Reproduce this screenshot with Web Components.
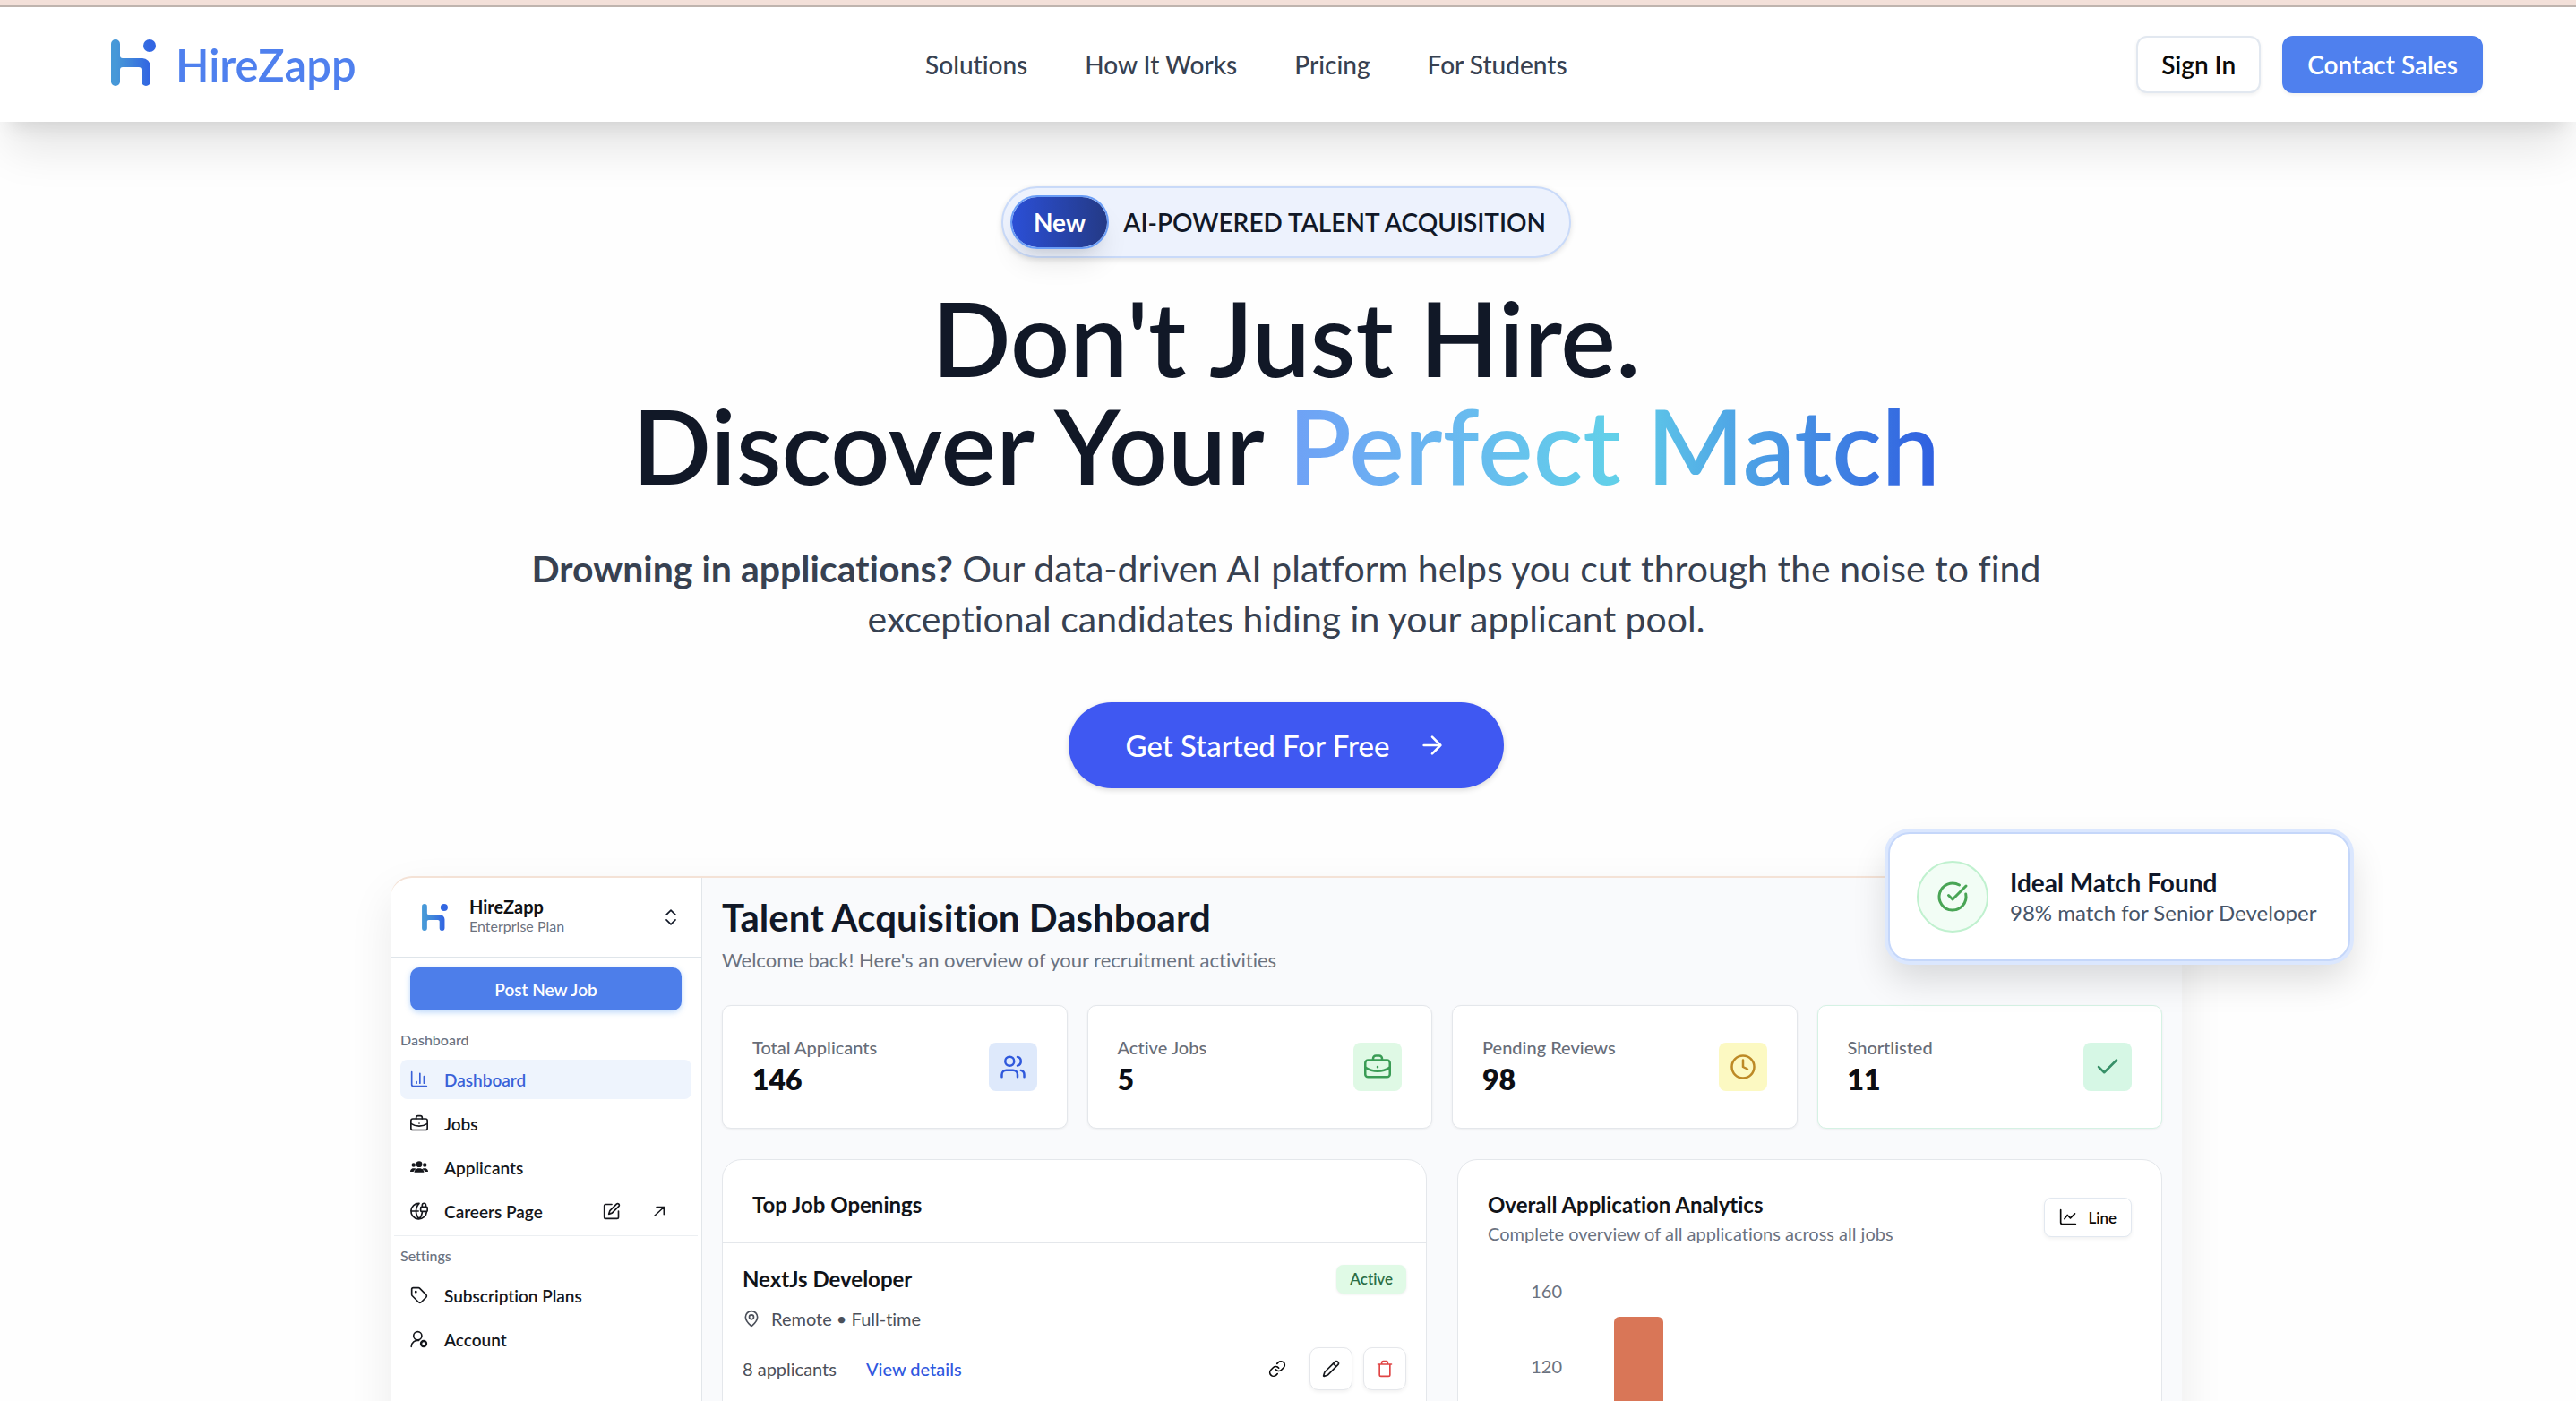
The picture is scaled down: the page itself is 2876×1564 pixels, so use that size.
<!DOCTYPE html>
<html lang="en">
<head>
<meta charset="utf-8">
<meta name="viewport" content="width=device-width, initial-scale=1">
<title>HireZapp</title>
<style>
    html{height:100%;}
    body{margin:0;height:100%;overflow:hidden;background:#fefefe;color:#111827;font-family:Lato,"Open Sans",sans-serif;font-size:28px;font-variant-ligatures:none;}
</style>
</head>
<body>

<hz-header>
    <hz-logo slot="logo">HireZapp</hz-logo>
    <hz-link>Solutions</hz-link>
    <hz-link>How It Works</hz-link>
    <hz-link>Pricing</hz-link>
    <hz-link>For Students</hz-link>
    <hz-button slot="actions">Sign In</hz-button>
    <hz-button slot="actions" kind="primary">Contact Sales</hz-button>
</hz-header>

<hz-hero>
    <hz-badge slot="badge" tag="New">AI-POWERED TALENT ACQUISITION</hz-badge>
    <span slot="title">Don't Just Hire.</span>
    <span slot="subtitle">Discover Your</span>
    <span slot="accent">Perfect Match</span>
    <strong slot="lead">Drowning in applications?</strong>
    Our data-driven AI platform helps you cut through the noise to find exceptional candidates hiding in your applicant pool.
    <hz-button slot="cta" kind="cta" icon="arrow-right">Get Started For Free</hz-button>
</hz-hero>

<hz-dashboard>
    <hz-sidebar slot="sidebar">
        <hz-group label="Dashboard">
            <hz-item icon="chart" active>Dashboard</hz-item>
            <hz-item icon="briefcase">Jobs</hz-item>
            <hz-item icon="people">Applicants</hz-item>
            <hz-item icon="globe-lock" tools>Careers Page</hz-item>
        </hz-group>
        <hz-group label="Settings" line>
            <hz-item icon="tag">Subscription Plans</hz-item>
            <hz-item icon="user-cog">Account</hz-item>
        </hz-group>
    </hz-sidebar>

    <span slot="title">Talent Acquisition Dashboard</span>
    <span slot="text">Welcome back! Here's an overview of your recruitment activities</span>

    <hz-stat slot="stats" icon="users" label="Total Applicants" color="blue">146</hz-stat>
    <hz-stat slot="stats" icon="briefcase" label="Active Jobs" color="green">5</hz-stat>
    <hz-stat slot="stats" icon="clock" label="Pending Reviews" color="yellow">98</hz-stat>
    <hz-stat slot="stats" icon="check" label="Shortlisted" color="mint">11</hz-stat>

    <hz-panel title-text="Top Job Openings" line>
        <hz-job status="Active" place="Remote • Full-time" count="8 applicants">NextJs Developer</hz-job>
    </hz-panel>
    <hz-panel title-text="Overall Application Analytics" text="Complete overview of all applications across all jobs">
        <hz-button slot="action" kind="small" icon="line-chart">Line</hz-button>
        <hz-chart value="146"></hz-chart>
    </hz-panel>

    <hz-toast slot="toast" text="98% match for Senior Developer">Ideal Match Found</hz-toast>
</hz-dashboard>

<script>
// stroke icons on a 24x24 grid
const icons = {
    'arrow-right': '<path d="M5 12h14M12 5l7 7-7 7"/>',
    'arrow-up-right': '<path d="M8 6h11v11M5 19 19 6"/>',
    'chevrons': '<path d="m6 8.500 6-6 6 6M6 15.500l6 6 6-6"/>',
    'chart': '<path d="M2 2v17a2 2 0 0 0 2 2h18M8.500 17v-2M13 17V4M18.500 17V8"/>',
    'briefcase': '<rect x="1" y="6" width="22" height="15" rx="2.500"/><path d="M8 6V4.500A2.500 2.500 0 0 1 10.500 2h3A2.500 2.500 0 0 1 16 4.500V6M1 12.500a20 20 0 0 0 22 0M12 12v.1"/>',
    'people': '<g fill="currentColor" stroke="none"><circle cx="12" cy="8" r="4"/><circle cx="4.500" cy="9" r="2.700"/><circle cx="19.500" cy="9" r="2.700"/><path d="M5.500 19c0-3.500 2-4 4.500-5.500h4c2.500 1.500 4.500 2 4.500 5.500zM0 18c0-2.500 1-3 3-4.500h3.500c.8.6 1 1 1.500 1.200C5.500 15.500 4.600 16.500 4.400 18zM24 18c0-2.500-1-3-3-4.500h-3.500c-.8.600-1 1-1.500 1.200 2.500.8 3.400 1.800 3.600 3.300z"/></g>',
    'globe-lock': '<path d="M22 13A10.500 10.500 0 1 1 12 1.600M12 1.600a15 15 0 0 0 0 20.800 14 14 0 0 0 4-8.400M1.500 12H11"/><rect x="14" y="6.500" width="9" height="6" rx="1"/><path d="M16 6.500V4a2.500 2.500 0 0 1 5 0v2.500"/>',
    'tag': '<path d="M12.600 2.600A2 2 0 0 0 11.200 2H4a2 2 0 0 0-2 2v7.200a2 2 0 0 0 .6 1.400l8.700 8.700a2.400 2.400 0 0 0 3.400 0l6.600-6.600a2.400 2.400 0 0 0 0-3.400z"/><circle cx="7.500" cy="7.500" r=".7"/>',
    'user-cog': '<circle cx="10" cy="7.500" r="5.500"/><path d="M1.500 22a8.500 8.500 0 0 1 10-8.300"/><circle cx="18" cy="18" r="3.500" stroke-width="3"/>',
    'edit': '<path d="M12 3H4a2 2 0 0 0-2 2v15a2 2 0 0 0 2 2h15a2 2 0 0 0 2-2v-8"/><path d="M18.400 2.600a2.100 2.100 0 0 1 3 3L12.400 14.600 8 16l1.400-4.400z"/>',
    'users': '<path d="M16 21v-2a4 4 0 0 0-4-4H6a4 4 0 0 0-4 4v2"/><circle cx="9" cy="7" r="4"/><path d="M22 21v-2a4 4 0 0 0-3-3.870M16 3.130a4 4 0 0 1 0 7.750"/>',
    'clock': '<circle cx="12" cy="12" r="10"/><path d="M12 6v6l4 2"/>',
    'check': '<path d="M20 6 9 17l-5-5"/>',
    'check-circle': '<path d="M21.800 10A10 10 0 1 1 17 3.335"/><path d="m9 11 3 3L22 4"/>',
    'pin': '<path d="M20 10c0 5-5.500 10.200-7.400 11.800a1 1 0 0 1-1.200 0C9.500 20.200 4 15 4 10a8 8 0 0 1 16 0"/><circle cx="12" cy="10" r="3"/>',
    'link': '<path d="M10 13a5 5 0 0 0 7.540.540l3-3a5 5 0 0 0-7.070-7.070l-1.720 1.710"/><path d="M14 11a5 5 0 0 0-7.540-.540l-3 3a5 5 0 0 0 7.070 7.070l1.710-1.710"/>',
    'pencil': '<path d="M21.200 6.800a2.800 2.800 0 0 0-4-4L3.800 16.200a2 2 0 0 0-.5.800l-1.300 4.400a.5.500 0 0 0 .6.600l4.400-1.300a2 2 0 0 0 .8-.5zM15 5l4 4"/>',
    'trash': '<path d="M3 6h18M19 6v14a2 2 0 0 1-2 2H7a2 2 0 0 1-2-2V6M8 6V4a2 2 0 0 1 2-2h4a2 2 0 0 1 2 2v2"/>',
    'line-chart': '<path d="M2 2v17a2 2 0 0 0 2 2h18M7 14l4-5 4 4 6-6"/>'
};

const mark = `
    <svg viewBox="0 0 50 52" fill="none">
        <defs><linearGradient id="g" x1="0" y1="0" x2="50" y2="0" gradientUnits="userSpaceOnUse">
            <stop offset=".1" stop-color="#4799d8"/><stop offset=".45" stop-color="#3f83db"/><stop offset=".85" stop-color="#3266e2"/>
        </linearGradient></defs>
        <path d="M0 5a5 5 0 0 1 10 0v13a3 3 0 0 0 3 3h22a9 9 0 0 1 9 9v17a5 5 0 0 1-10 0V34a3 3 0 0 0-3-3H13a3 3 0 0 0-3 3v13a5 5 0 0 1-10 0z" fill="url(#g)"/>
        <circle cx="43" cy="7" r="7" fill="url(#g)"/>
    </svg>`;

// base class: clones the class template into an open shadow root
class Base extends HTMLElement{
    connectedCallback(){
        if(this.shadowRoot) return;
        const template = document.createElement('template');
        template.innerHTML = this.render();
        this.attachShadow({mode: 'open'});
        this.shadowRoot.appendChild(template.content.cloneNode(true));
    }
    attr(name){
        return this.getAttribute(name) || '';
    }
}

class Icon extends Base{
    render(){
        return `
        <style>
            :host{display:block;flex:none;width:20px;height:20px;}
            svg{display:block;width:100%;height:100%;overflow:visible;}
        </style>
        <svg viewBox="0 0 24 24" fill="none" stroke="currentColor" stroke-width="2" stroke-linecap="round" stroke-linejoin="round" aria-hidden="true">${icons[this.attr('name')]}</svg>`;
    }
}

class Logo extends Base{
    render(){
        return `
        <style>
            :host{display:block;font-size:49px;line-height:56px;font-weight:600;color:#4f80ee;}
            a{display:flex;align-items:center;gap:22px;color:inherit;text-decoration:none;}
            svg{width:50px;height:52px;margin-bottom:4px;}
        </style>
        <a href="#">${mark}<slot></slot></a>`;
    }
}

class Link extends Base{
    render(){
        return `
        <style>
            :host{display:block;}
            a{color:#374151;font-weight:500;text-decoration:none;}
        </style>
        <a href="#"><slot></slot></a>`;
    }
}

class Header extends Base{
    render(){
        return `
        <style>
            :host{display:block;position:relative;z-index:2;border-top:6px solid #f3e0d9;}
            header{display:flex;align-items:center;justify-content:space-between;height:128px;padding:0 104px 0 124px;border-top:2px solid #bfb4ae;background:#fff;box-shadow:0 40px 50px -10px rgba(0,0,0,.1),0 16px 20px -12px rgba(0,0,0,.1);}
            nav{display:flex;gap:64px;}
            .actions{display:flex;gap:24px;}
        </style>
        <header>
            <slot name="logo"></slot>
            <nav><slot></slot></nav>
            <div class="actions"><slot name="actions"></slot></div>
        </header>`;
    }
}

class Button extends Base{
    render(){
        const icon = this.attr('icon') ? `<hz-icon name="${this.attr('icon')}"></hz-icon>` : '';
        return `
        <style>
            :host{display:block;}
            button{display:flex;align-items:center;justify-content:center;box-sizing:border-box;width:100%;height:64px;padding:0 26px;margin:0;border:2px solid #e2e8f0;border-radius:12px;background:#fff;color:#0a0a0a;font:inherit;font-weight:600;font-variant-ligatures:none;box-shadow:0 2px 4px rgba(0,0,0,.06);white-space:nowrap;cursor:pointer;}
            :host([kind=primary]) button{border-color:#4f80ee;background:#4f80ee;color:#fff;}
            :host([kind=cta]) button{height:96px;padding:0 64px;gap:32px;border:0;border-radius:48px;background:#3f58f2;color:#fff;font-size:33px;font-weight:500;box-shadow:0 2px 6px rgba(0,0,0,.15);}
            :host([kind=cta]) hz-icon{width:32px;height:32px;}
            :host([kind=post]) button{height:48px;border:0;border-radius:10px;background:#4d7eea;color:#fff;font-size:19px;box-shadow:0 2px 6px rgba(60,140,240,.35);}
            :host([kind=small]) button{height:44px;padding:0 16px;gap:12px;border-width:1px;border-radius:8px;font-size:17px;}
            :host([kind=square]) button{width:48px;height:48px;padding:0;border:1px solid #e5e7eb;border-radius:10px;color:inherit;}
            :host([kind=ghost]) button{width:48px;height:48px;padding:0;border:0;background:none;box-shadow:none;}
        </style>
        <button type="button" ${this.attr('label') ? `aria-label="${this.attr('label')}"` : ''}><slot></slot>${icon}</button>`;
    }
    connectedCallback(){
        super.connectedCallback();
        // the small button has its icon in front
        if(this.attr('kind') == 'small'){
            this.shadowRoot.querySelector('button').prepend(this.shadowRoot.querySelector('hz-icon'));
        }
    }
}

class Badge extends Base{
    render(){
        return `
        <style>
            :host{display:flex;align-items:center;gap:16px;box-sizing:border-box;height:80px;padding:0 26px 0 8px;border:2px solid #c9daf9;border-radius:40px;background:#edf2fd;color:#111827;font-weight:600;box-shadow:0 2px 6px rgba(0,0,0,.12);}
            .tag{display:flex;align-items:center;box-sizing:border-box;height:60px;padding:0 24px;border:2px solid #6a9df6;border-radius:30px;background:linear-gradient(90deg,#2b4fd6,#243a86) padding-box;color:#fff;font-weight:700;box-shadow:0 20px 30px -6px rgba(0,0,0,.1),0 8px 12px -8px rgba(0,0,0,.1);}
        </style>
        <span class="tag">${this.attr('tag')}</span><slot></slot>`;
    }
}

class Hero extends Base{
    render(){
        return `
        <style>
            :host{display:block;padding:72px 4px 0 0;}
            section{display:flex;flex-direction:column;align-items:center;text-align:center;}
            h1{margin:29px 0 0;font-size:116px;line-height:120px;font-weight:600;color:#111827;}
            .row{display:block;}
            .accent{background:linear-gradient(90deg,#6fa1f6,#62d0e9 50%,#2f5ee0);-webkit-background-clip:text;background-clip:text;color:transparent;}
            p{max-width:1760px;margin:50px 0 65px;font-size:41px;line-height:56px;color:#374151;}
        </style>
        <section>
            <slot name="badge"></slot>
            <h1><span class="row"><slot name="title"></slot></span><span class="row"><slot name="subtitle"></slot> <span class="accent"><slot name="accent"></slot></span></span></h1>
            <p><slot name="lead"></slot> <slot></slot></p>
            <slot name="cta"></slot>
        </section>`;
    }
}

class Dashboard extends Base{
    render(){
        return `
        <style>
            :host{display:block;padding:98px 4px 0 0;}
            .frame{display:flex;position:relative;width:min(2000px,92%);min-height:1200px;margin:0 auto;box-sizing:border-box;border-top:2px solid #f4e2d6;border-radius:24px;background:#fff;box-shadow:0 20px 50px rgba(0,0,0,.08);}
            main{flex:1;min-width:0;padding:20px 22px;background:#f9fafc;}
            h2{margin:0;font-size:42px;line-height:48px;font-weight:700;}
            p{margin:10px 0 36px;font-size:22px;line-height:28px;color:#6b7280;}
            .stats{display:grid;grid-template-columns:repeat(4,1fr);gap:22px;}
            .panels{display:grid;grid-template-columns:repeat(2,1fr);gap:34px;margin-top:34px;}
            .toast{position:absolute;top:-51px;right:-188px;}
        </style>
        <div class="frame">
            <slot name="sidebar"></slot>
            <main>
                <h2><slot name="title"></slot></h2>
                <p><slot name="text"></slot></p>
                <div class="stats"><slot name="stats"></slot></div>
                <div class="panels"><slot></slot></div>
            </main>
            <div class="toast"><slot name="toast"></slot></div>
        </div>`;
    }
}

class Sidebar extends Base{
    render(){
        return `
        <style>
            :host{display:block;flex:none;box-sizing:border-box;width:348px;border-right:1px solid #e2e6ea;}
            .top{display:flex;align-items:center;height:88px;padding:0 24px 0 35px;border-bottom:1px solid #dfe5ea;}
            svg{width:29px;height:30px;margin-right:24px;}
            .name{flex:1;margin-bottom:4px;font-size:20px;line-height:24px;font-weight:700;color:#0f1115;}
            small{display:block;font-size:16px;line-height:20px;font-weight:400;color:#6b7280;}
            .chevrons{width:20px;height:20px;}
            .post{padding:11px 22px;}
        </style>
        <div class="top">${mark}<div class="name">HireZapp<small>Enterprise Plan</small></div><hz-icon class="chevrons" name="chevrons"></hz-icon></div>
        <div class="post"><hz-button kind="post">Post New Job</hz-button></div>
        <slot></slot>`;
    }
}

class Group extends Base{
    render(){
        return `
        <style>
            :host{display:block;margin:0 4px 5px;padding:12px 7px 0;}
            :host([line]){border-top:1px solid #eceff2;}
            h3{margin:0 0 12px;font-size:16px;line-height:20px;font-weight:500;color:#6b7280;}
            nav{display:grid;gap:5px;}
        </style>
        <h3>${this.attr('label')}</h3>
        <nav><slot></slot></nav>`;
    }
}

class Item extends Base{
    render(){
        const tools = this.hasAttribute('tools') ? '<hz-icon class="edit" name="edit"></hz-icon><hz-icon class="open" name="arrow-up-right"></hz-icon>' : '';
        return `
        <style>
            :host{display:block;}
            a{display:flex;align-items:center;gap:18px;height:44px;padding:0 11px;border-radius:8px;color:#15171c;font-size:19px;font-weight:600;text-decoration:none;}
            :host([active]) a{background:#eef4fd;color:#3961d8;}
            .edit{margin-left:auto;}
            .open{width:18px;height:18px;margin:0 16px;}
        </style>
        <a href="#"><hz-icon name="${this.attr('icon')}"></hz-icon><slot></slot>${tools}</a>`;
    }
}

class Stat extends Base{
    render(){
        return `
        <style>
            :host{display:flex;align-items:center;justify-content:space-between;box-sizing:border-box;height:138px;padding:0 33px;border:1px solid #e4e7eb;border-radius:10px;background:#fff;box-shadow:0 1px 3px rgba(0,0,0,.06);}
            .label{font-size:20px;line-height:24px;font-weight:500;color:#686d78;}
            .value{margin-top:4px;font-size:32px;line-height:40px;font-weight:800;color:#0c0e14;}
            .box{padding:12px;border-radius:8px;background:#dee9fb;color:#3059dc;}
            hz-icon{width:30px;height:30px;}
            :host([color=green]) .box{background:#dff9e5;color:#3a9c55;}
            :host([color=yellow]) .box{background:#fcf9c2;color:#bd8a26;}
            :host([color=mint]) .box{background:#d6f7e5;color:#379068;}
            :host([color=mint]){border-color:#d5f2e4;}
        </style>
        <div><div class="label">${this.attr('label')}</div><div class="value"><slot></slot></div></div>
        <div class="box"><hz-icon name="${this.attr('icon')}"></hz-icon></div>`;
    }
}

class Panel extends Base{
    render(){
        const text = this.attr('text') ? `<p>${this.attr('text')}</p>` : '';
        return `
        <style>
            :host{display:block;min-height:700px;border:1px solid #e4e7eb;border-radius:22px;background:#fff;}
            header{display:flex;align-items:center;justify-content:space-between;padding:34px 33px 26px;}
            :host([line]) header{border-bottom:1px solid #e4e7eb;}
            h3{margin:0;font-size:24px;line-height:32px;font-weight:700;color:#111318;}
            p{margin:4px 0 0;font-size:20px;line-height:24px;color:#6b7280;}
        </style>
        <header><div><h3>${this.attr('title-text')}</h3>${text}</div><slot name="action"></slot></header>
        <slot></slot>`;
    }
}

class Job extends Base{
    render(){
        return `
        <style>
            :host{display:block;padding:24px 22px;font-size:20px;line-height:24px;color:#4b505a;}
            div{display:flex;align-items:center;}
            h4{flex:1;margin:0;font-size:24px;line-height:32px;font-weight:700;color:#111318;}
            .status{padding:0 15px;border-radius:8px;background:#e0fae6;color:#2c6e45;font-size:17px;line-height:32px;font-weight:600;box-shadow:0 1px 3px rgba(0,0,0,.08);}
            .place{gap:12px;margin:16px 0 20px;}
            .count{margin-right:33px;}
            a{flex:1;color:#2f58e0;font-weight:500;text-decoration:none;}
            .tools{gap:12px;color:#17191e;}
            .delete{color:#e04545;}
        </style>
        <div><h4><slot></slot></h4><span class="status">${this.attr('status')}</span></div>
        <div class="place"><hz-icon name="pin"></hz-icon>${this.attr('place')}</div>
        <div>
            <span class="count">${this.attr('count')}</span><a href="#">View details</a>
            <div class="tools">
                <hz-button kind="ghost" icon="link" label="Copy link"></hz-button>
                <hz-button kind="square" icon="pencil" label="Edit"></hz-button>
                <hz-button class="delete" kind="square" icon="trash" label="Delete"></hz-button>
            </div>
        </div>`;
    }
}

class Chart extends Base{
    render(){
        const height = Number(this.attr('value')) / 160 * 100;
        return `
        <style>
            :host{display:flex;gap:58px;padding:40px 33px;}
            .axis{display:grid;align-content:start;gap:60px;width:83px;font-size:20px;line-height:24px;color:#6b7280;text-align:right;}
            .plot{display:flex;align-items:flex-end;flex:1;height:336px;padding-top:12px;}
            .bar{width:55px;height:${height}%;border-radius:6px 6px 0 0;background:#d97657;}
            :host{padding-top:14px;}
        </style>
        <div class="axis"><span>160</span><span>120</span></div>
        <div class="plot"><div class="bar"></div></div>`;
    }
}

class Toast extends Base{
    render(){
        return `
        <style>
            :host{display:flex;align-items:center;gap:24px;box-sizing:border-box;min-width:516px;height:144px;padding:0 30px;border:2px solid #c5d7fa;border-radius:24px;background:#fff;box-shadow:0 0 0 4px #dbe7fe,0 20px 40px rgba(0,0,0,.14);white-space:nowrap;}
            .circle{padding:20px;border:2px solid #c0f1cf;border-radius:50%;background:#f2fdf5;color:#49a555;}
            hz-icon{width:36px;height:36px;}
            b{display:block;font-size:28px;line-height:36px;font-weight:700;color:#0f172a;}
            span{display:block;font-size:24px;line-height:32px;color:#475569;}
        </style>
        <div class="circle"><hz-icon name="check-circle"></hz-icon></div>
        <div><b><slot></slot></b><span>${this.attr('text')}</span></div>`;
    }
}

customElements.define('hz-icon', Icon);
customElements.define('hz-logo', Logo);
customElements.define('hz-link', Link);
customElements.define('hz-header', Header);
customElements.define('hz-button', Button);
customElements.define('hz-badge', Badge);
customElements.define('hz-hero', Hero);
customElements.define('hz-dashboard', Dashboard);
customElements.define('hz-sidebar', Sidebar);
customElements.define('hz-group', Group);
customElements.define('hz-item', Item);
customElements.define('hz-stat', Stat);
customElements.define('hz-panel', Panel);
customElements.define('hz-job', Job);
customElements.define('hz-chart', Chart);
customElements.define('hz-toast', Toast);
</script>
</body>
</html>
